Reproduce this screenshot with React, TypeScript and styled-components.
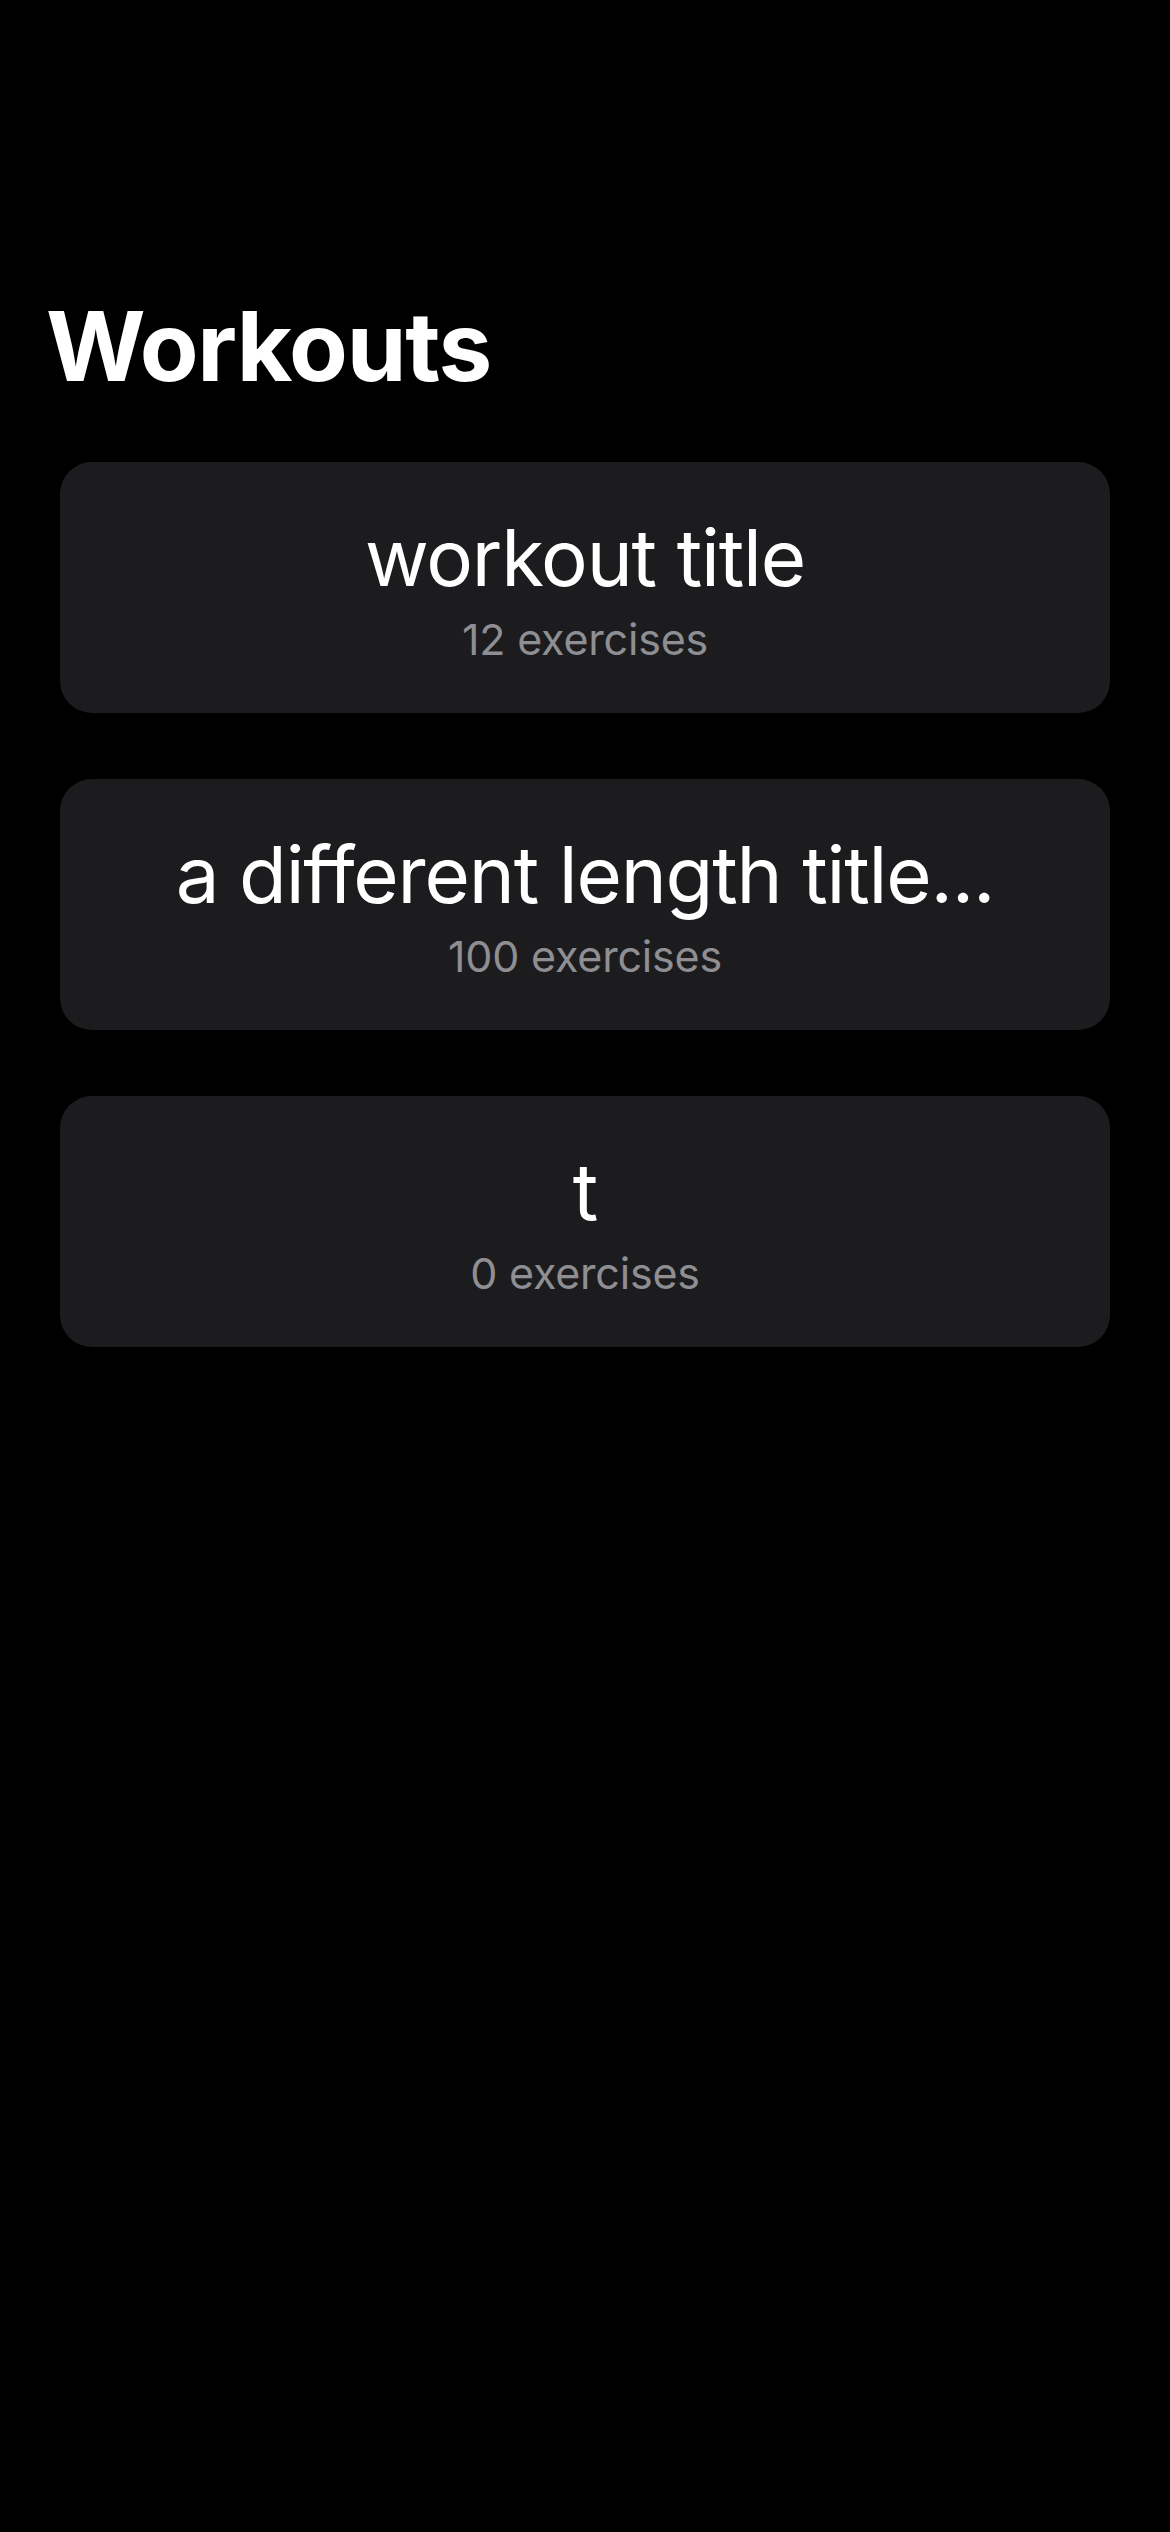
import React from "react";
import styled, { createGlobalStyle } from "styled-components";

const GlobalStyle = createGlobalStyle`
  html, body {
    margin: 0;
    padding: 0;
    background: #000000;
  }
  body {
    font-family: Inter, "Noto Sans", "Liberation Sans", sans-serif;
    color: #ffffff;
    -webkit-font-smoothing: antialiased;
  }
`;

const Page = styled.main`
  min-height: 2532px;
  background: #000000;
  padding-top: 298px;
  box-sizing: border-box;
`;

const LargeTitle = styled.h1`
  margin: 0;
  padding: 0 46px;
  font-size: 96px;
  line-height: 96px;
  font-weight: 700;
  letter-spacing: -1.2px;
  color: #ffffff;
`;

const List = styled.section`
  display: flex;
  flex-direction: column;
  gap: 66px;
  padding: 0 60px;
  margin-top: 68px;
`;

const Card = styled.article`
  display: flex;
  flex-direction: column;
  align-items: center;
  gap: 8px;
  padding: 49px 40px 48px;
  background: #1c1c1e;
  border-radius: 32px;
  min-width: 0;
`;

const CardTitle = styled.h2`
  margin: 0;
  max-width: 100%;
  font-size: 78px;
  line-height: 94px;
  font-weight: 400;
  letter-spacing: -1.2px;
  color: #ffffff;
  white-space: nowrap;
  overflow: hidden;
  text-overflow: ellipsis;
`;

const CardSubtitle = styled.p`
  margin: 0;
  font-size: 43px;
  line-height: 52px;
  font-weight: 400;
  letter-spacing: -0.2px;
  color: #8e8e93;
`;

type Workout = { title: string; count: number };

const workouts: Workout[] = [
  { title: "workout title", count: 12 },
  { title: "a different length title...", count: 100 },
  { title: "t", count: 0 },
];

export default function App() {
  return (
    <>
      <GlobalStyle />
      <Page>
        <LargeTitle>Workouts</LargeTitle>
        <List>
          {workouts.map((w) => (
            <Card key={w.title}>
              <CardTitle>{w.title}</CardTitle>
              <CardSubtitle>{w.count} exercises</CardSubtitle>
            </Card>
          ))}
        </List>
      </Page>
    </>
  );
}
